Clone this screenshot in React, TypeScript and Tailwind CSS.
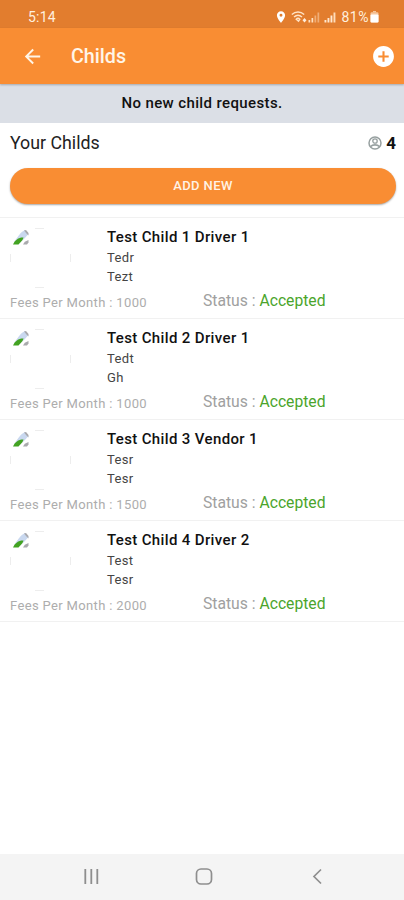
import { MdArrowBack, MdAddCircle, MdLocationOn } from 'react-icons/md'

interface Child {
  name: string
  school: string
  address: string
  fees: number
  status: string
}

const children: Child[] = [
  { name: 'Test Child 1 Driver 1', school: 'Tedr', address: 'Tezt', fees: 1000, status: 'Accepted' },
  { name: 'Test Child 2 Driver 1', school: 'Tedt', address: 'Gh', fees: 1000, status: 'Accepted' },
  { name: 'Test Child 3 Vendor 1', school: 'Tesr', address: 'Tesr', fees: 1500, status: 'Accepted' },
  { name: 'Test Child 4 Driver 2', school: 'Test', address: 'Tesr', fees: 2000, status: 'Accepted' },
]

function StatusBar() {
  return (
    <div className="flex h-7 items-center bg-[#e27d2e] pt-[6px] pr-[25px] pl-7 text-[#fff0df]">
      <span className="text-[14px] leading-none tracking-[0.2px]">5:14</span>
      <div className="ml-auto flex items-center">
        <MdLocationOn className="mr-[3px] h-[14px] w-[14px] text-white" />
        {/* wifi and the two signal meters */}
        <svg width="47" height="14" viewBox="0 0 47 14" fill="none" className="mr-[4px]">
          <path d="M.800 4.500C4.500 1.200 9.500 1.200 13.200 4.500M3 7C5.500 4.800 8.500 4.800 11 7M5.200 9.200C6.300 8 7.700 8 8.800 9.200L7.500 11.200Z" stroke="#ffe3c6" strokeWidth="1.400" />
          <path d="M11.500 10.200L13.500 8L15.500 10.200L13.500 12.400Z" fill="#ffeedd" />
          <path d="M17.500 10h1.700v2.500h-1.700zM20.500 8h1.700v4.500h-1.700z" fill="#ffe0c0" />
          <path d="M23.500 5.500h1.700v7h-1.700zM26.500 2.500h1.700v10h-1.700z" fill="#f0ae78" />
          <path d="M33.500 10h1.900v2.500h-1.900zM36.500 8h1.900v4.500h-1.900zM39.500 5.500h1.900v7h-1.900z" fill="#ffe8d0" />
          <path d="M42.500 2.500h1.900v10h-1.900z" fill="#ffdcb8" />
        </svg>
        <span className="text-[14px] leading-none tracking-[0.5px]">81%</span>
        <svg width="9" height="12" viewBox="0 0 9 12" className="ml-[1px]">
          <path d="M3 0h3v1.300h-3z" fill="#f6c79e" />
          <rect x="0.500" y="1.200" width="8" height="10.300" rx="1.300" fill="#f6c79e" />
          <rect x="0.500" y="3.500" width="8" height="8" rx="1" fill="#fff" />
        </svg>
      </div>
    </div>
  )
}

function BrokenPhoto() {
  return (
    <svg width="62" height="62" viewBox="0 0 62 62" fill="none" className="mt-px">
      <path d="M25 1.500h9M25 60.500h9M.500 27v8M60.500 27v8" stroke="#ededed" />
      <path d="M4 15.500C7 10.500 10.500 5 15 3L18.500 7L14 12L8 17Z" fill="#c9d8ef" />
      <path d="M14 3.500L16 3L18.500 6V8.500L16.500 6.500Z" fill="#a9a9ad" />
      <path d="M3 17.500C5 13 8.500 10.300 13.500 10.500L12.500 13L8.500 17.500Z" fill="#43a322" />
      <path d="M13 17.500L14.800 14.800L18.500 13V15.500L17 17.500Z" fill="#a9a9ad" />
    </svg>
  )
}

function ChildRow({ child }: { child: Child }) {
  return (
    <div className="h-[101px] border-b border-[#f1f1f1] pt-[8px] pl-[10px]">
      <div className="flex h-[63px]">
        <div className="w-[97px]">
          <BrokenPhoto />
        </div>
        <div>
          <h3 className="text-[15px] leading-[22px] font-medium tracking-[0.36px] text-[#111]">{child.name}</h3>
          <p className="text-[13px] leading-[19px] tracking-[0.35px] text-[#444]">{child.school}</p>
          <p className="text-[13px] leading-[19px] tracking-[0.35px] text-[#444]">{child.address}</p>
        </div>
      </div>
      <div className="flex">
        <p className="w-[193px] pt-[4px] text-[13px] leading-[20px] tracking-[0.35px] text-[#adadad]">
          Fees Per Month : {child.fees}
        </p>
        <p className="text-[15.7px] leading-[23px] text-[#a0a0a0]">
          Status : <span className="text-[#4ba52c]">{child.status}</span>
        </p>
      </div>
    </div>
  )
}

export default function App() {
  return (
    <div className="flex h-[900px] w-[404px] flex-col overflow-hidden bg-white font-[Roboto,sans-serif]">
      <StatusBar />

      <header className="z-10 flex h-[56px] shrink-0 items-center bg-[#f98d33] pr-[8px] pl-[21px] text-[#fff5e8] shadow-[0_1px_2px_rgba(0,0,0,0.25)]">
        <MdArrowBack className="h-[23px] w-[23px]" />
        <h1 className="ml-[27px] pt-px text-[19.7px] font-medium">Childs</h1>
        <MdAddCircle className="ml-auto h-[25px] w-[25px] text-white" />
      </header>

      <div className="flex h-[39px] shrink-0 items-center justify-center bg-[#dbdfe6] text-[15px] font-medium tracking-[0.38px] text-[#111]">
        No new child requests.
      </div>

      <section className="flex h-[95px] shrink-0 flex-col border-b border-[#f1f1f1] pr-[8px] pl-[10px]">
        <div className="flex h-[45px] items-center pb-[4px] text-[#222]">
          <h2 className="text-[17.8px]">Your Childs</h2>
          <div className="ml-auto flex items-center">
            <svg width="14" height="14" viewBox="0 0 14 14" fill="none" stroke="#97a0a0" className="mb-px">
              <circle cx="7" cy="7" r="6" strokeWidth="1.500" />
              <circle cx="7" cy="5" r="2.200" strokeWidth="1.300" />
              <path d="M2.800 10.500C4.500 8.300 9.500 8.300 11.200 10.500" strokeWidth="1.800" />
            </svg>
            <span className="ml-[4px] text-[17px] font-bold text-[#111]">4</span>
          </div>
        </div>
        <button className="h-[36px] rounded-full bg-[#f98d33] text-[13px] font-medium tracking-[0.4px] text-[#fff3e5] shadow-[0_1px_2px_rgba(0,0,0,0.35)]">
          ADD NEW
        </button>
      </section>

      <main className="flex-1">
        {children.map((child) => (
          <ChildRow key={child.name} child={child} />
        ))}
      </main>

      <nav className="flex h-[46px] shrink-0 items-center bg-[#f4f4f4]">
        <svg width="404" height="46" viewBox="0 0 404 46" fill="none" stroke="#8e8e8e">
          <path d="M85.300 15v15M91.300 15v15M97.300 15v15" strokeWidth="1.800" />
          <rect x="196.500" y="15" width="15" height="15" rx="4.500" strokeWidth="1.700" />
          <path d="M321 15.500L314 22.500L321 29.500" strokeWidth="1.700" />
        </svg>
      </nav>
    </div>
  )
}
